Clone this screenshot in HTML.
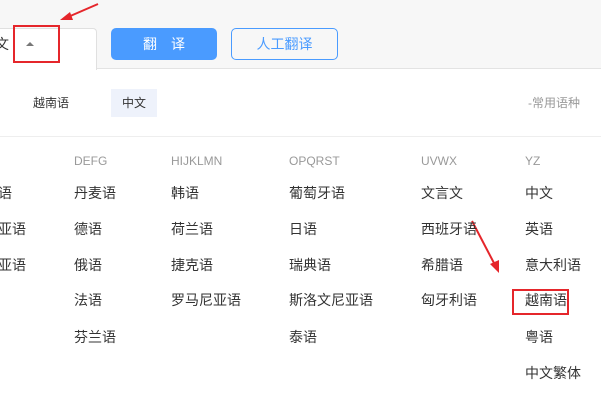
<!DOCTYPE html>
<html><head><meta charset="utf-8"><style>
body{margin:0;width:601px;height:401px;overflow:hidden;background:#fff;position:relative;font-family:"Liberation Sans","Noto Sans CJK SC",sans-serif;font-size:14px;color:#333}
.a{position:absolute;white-space:nowrap;line-height:16px}
.h{color:#999;font-size:12px}
</style></head><body>
<div style="position:absolute;left:0;top:0;width:601px;height:68px;background:#f7f7f7;border-bottom:1px solid #e3e3e3"></div>
<div style="position:absolute;left:-4px;top:28px;width:99px;height:41px;background:#fff;border:1px solid #e0e0e0;border-bottom:none;border-radius:0 4px 0 0"></div>
<div class="a" style="left:-5px;top:36px;font-size:14px">文</div>
<div style="position:absolute;left:26px;top:42px;width:0;height:0;border-left:4px solid transparent;border-right:4px solid transparent;border-bottom:4px solid #777"></div>
<div style="position:absolute;left:13px;top:25px;width:43px;height:34px;border:2px solid #e5262b"></div>
<div style="position:absolute;left:111px;top:28px;width:106px;height:32px;background:#4a9bff;border-radius:5px;color:#fff;font-size:14px;text-align:center;line-height:32px;letter-spacing:14px;text-indent:14px">翻译</div>
<div style="position:absolute;left:231px;top:28px;width:105px;height:30px;border:1px solid #4a9bff;border-radius:5px;color:#4a9bff;font-size:14px;text-align:center;line-height:30px">人工翻译</div>
<svg style="position:absolute;left:0;top:0" width="601" height="401">
<g stroke="#e5262b" stroke-width="2" fill="#e5262b">
<line x1="98" y1="4" x2="68" y2="17"/><polygon points="60,20 70,12 73,20" stroke="none"/>
<line x1="472" y1="221" x2="495" y2="265"/><polygon points="499,273 490,264 499,260" stroke="none"/>
</g></svg>
<div class="a" style="left:33px;top:95px;font-size:12px">越南语</div>
<div style="position:absolute;left:111px;top:89px;width:46px;height:28px;background:#eef2fb;font-size:12px;text-align:center;line-height:28px">中文</div>
<div class="a h" style="left:528px;top:95px">-常用语种</div>
<div style="position:absolute;left:0;top:136px;width:601px;height:1px;background:#eee"></div>
<div class="a h" style="left:74px;top:153px">DEFG</div>
<div class="a h" style="left:171px;top:153px">HIJKLMN</div>
<div class="a h" style="left:289px;top:153px">OPQRST</div>
<div class="a h" style="left:421px;top:153px">UVWX</div>
<div class="a h" style="left:525px;top:153px">YZ</div>
<div class="a" style="left:-16px;top:185px">韩语</div>
<div class="a" style="left:-16px;top:221px">利亚语</div>
<div class="a" style="left:-16px;top:257px">利亚语</div>
<div class="a" style="left:74px;top:185px">丹麦语</div>
<div class="a" style="left:74px;top:221px">德语</div>
<div class="a" style="left:74px;top:257px">俄语</div>
<div class="a" style="left:74px;top:292px">法语</div>
<div class="a" style="left:74px;top:329px">芬兰语</div>
<div class="a" style="left:171px;top:185px">韩语</div>
<div class="a" style="left:171px;top:221px">荷兰语</div>
<div class="a" style="left:171px;top:257px">捷克语</div>
<div class="a" style="left:171px;top:292px">罗马尼亚语</div>
<div class="a" style="left:289px;top:185px">葡萄牙语</div>
<div class="a" style="left:289px;top:221px">日语</div>
<div class="a" style="left:289px;top:257px">瑞典语</div>
<div class="a" style="left:289px;top:292px">斯洛文尼亚语</div>
<div class="a" style="left:289px;top:329px">泰语</div>
<div class="a" style="left:421px;top:185px">文言文</div>
<div class="a" style="left:421px;top:221px">西班牙语</div>
<div class="a" style="left:421px;top:257px">希腊语</div>
<div class="a" style="left:421px;top:292px">匈牙利语</div>
<div class="a" style="left:525px;top:185px">中文</div>
<div class="a" style="left:525px;top:221px">英语</div>
<div class="a" style="left:525px;top:257px">意大利语</div>
<div class="a" style="left:525px;top:292px">越南语</div>
<div class="a" style="left:525px;top:329px">粤语</div>
<div class="a" style="left:525px;top:365px">中文繁体</div>
<div style="position:absolute;left:512px;top:289px;width:53px;height:22px;border:2px solid #e5262b"></div>
</body></html>
